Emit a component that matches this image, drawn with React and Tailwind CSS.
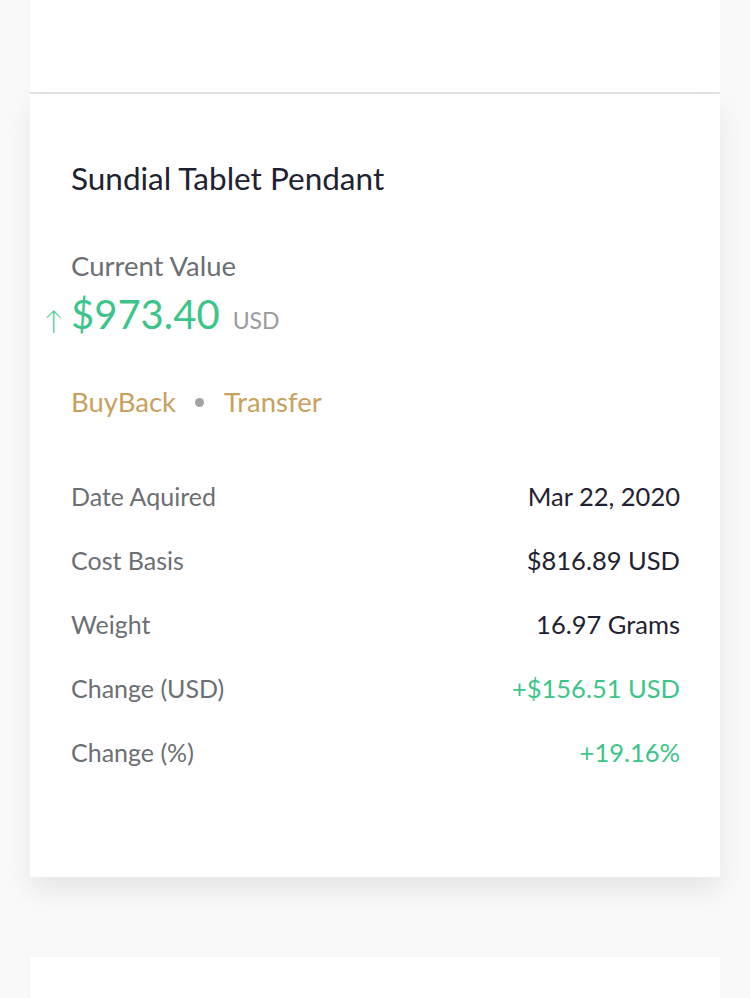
export default function App() {
  const rows = [
    ["Date Aquired", "Mar 22, 2020", "text-[#1f2230]"],
    ["Cost Basis", "$816.89 USD", "text-[#1f2230]"],
    ["Weight", "16.97 Grams", "text-[#1f2230]"],
    ["Change (USD)", "+$156.51 USD", "text-[#3cc58a]"],
    ["Change (%)", "+19.16%", "text-[#3cc58a]"],
  ];
  return (
    <div className="min-h-[998px] bg-[#f9f9f9] overflow-hidden" style={{ fontFamily: "Lato, 'Noto Sans', sans-serif" }}>
      <div className="mx-[30px]">
        <div className="h-[94px] bg-white border-b-2 border-[#e3e3e3]"></div>
        <div className="bg-white shadow-[0_14px_26px_rgba(0,0,0,0.08)] pl-[41px] pr-[40px] pt-[64px] pb-[109px]">
          <div className="text-[31.5px] leading-[40px] text-[#1f2230]">Sundial Tablet Pendant</div>
          <div className="mt-[51px] text-[27.5px] leading-[34px] text-[#6c6f73]">Current Value</div>
          <div className="relative flex items-baseline mt-[7px]">
            <span className="absolute left-[-27px] bottom-[-2px] text-[26px] text-[#3cc58a] font-light">↑</span>
            <span className="text-[40px] leading-[48px] text-[#3cc58a]">$973.40</span>
            <span className="ml-[13px] text-[23px] text-[#9a9b9d]">USD</span>
          </div>
          <div className="mt-[48px] flex items-center text-[27.5px] leading-[32px] text-[#c9a15f]">
            <span>BuyBack</span>
            <span className="ml-[19px] mr-[20px] w-[9px] h-[9px] rounded-full bg-[#a3a3a3]"></span>
            <span>Transfer</span>
          </div>
          <div className="mt-[62px] flex flex-col gap-[32px]">
            {rows.map(([l, v, c]) => (
              <div key={l} className="flex justify-between items-center leading-[32px]">
                <span className="text-[25px] text-[#6c6f73]">{l}</span>
                <span className={"text-[25.5px] " + c}>{v}</span>
              </div>
            ))}
          </div>
        </div>
        <div className="mt-[80px] h-[60px] bg-white"></div>
      </div>
    </div>
  );
}
